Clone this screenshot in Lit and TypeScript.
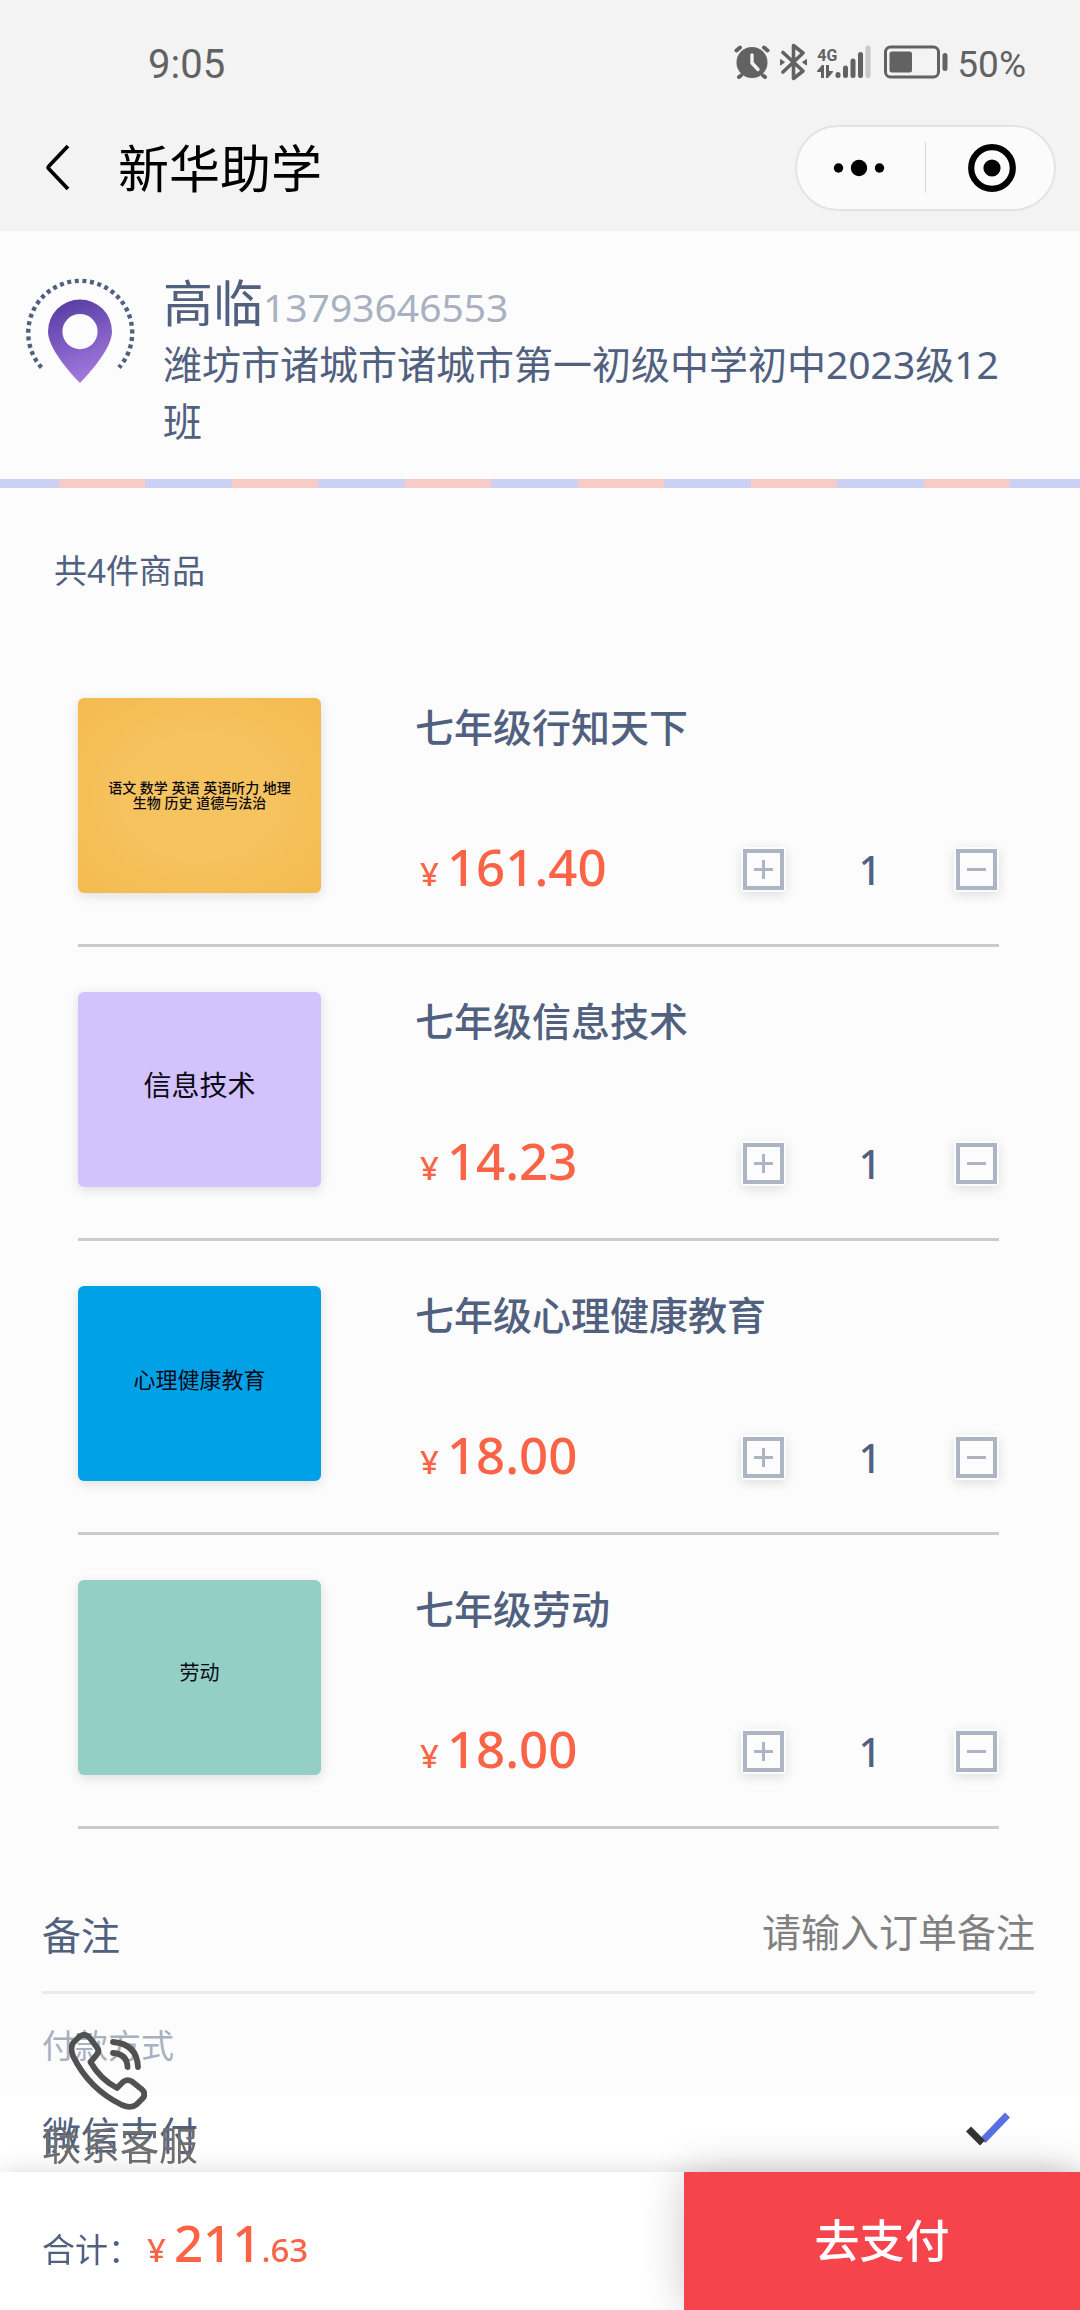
import { LitElement, html, svg, css } from "lit";
import { customElement, property, state } from "lit/decorators.js";
import { classMap } from "lit/directives/class-map.js";

interface Product {
  name: string;
  price: string;
  cover: string[];
  theme: string;
  count: number;
}

const baseFont = css`
  font-family: "Noto Sans", "Noto Sans CJK SC", sans-serif;
`;

@customElement("status-bar")
export class StatusBar extends LitElement {
  static styles = css`
    :host {
      display: flex;
      align-items: center;
      justify-content: space-between;
      height: 78px;
      padding: 26px 54px 0 148px;
      color: #626262;
      font-family: Roboto, sans-serif;
    }
    .time {
      font-size: 40px;
      line-height: 48px;
    }
    .icons {
      display: flex;
      align-items: center;
      height: 48px;
    }
    .icon {
      display: block;
      flex: none;
      padding-bottom: 6px;
    }
    .bluetooth {
      margin-left: 10px;
    }
    .network {
      display: flex;
      flex-direction: column;
      width: 18px;
      margin-left: 10px;
      padding-bottom: 6px;
      font-size: 16px;
      font-weight: 700;
      line-height: 18px;
    }
    .battery {
      margin-left: 13px;
    }
    .percent {
      margin-left: 9px;
      font-size: 37px;
      line-height: 48px;
    }
  `;

  render() {
    return html`
      <span class="time">9:05</span>
      <div class="icons">
        <svg class="icon" width="36" height="34" viewBox="0 0 36 34" aria-hidden="true">
          <g fill="none" stroke="currentColor" stroke-width="4" stroke-linecap="round">
            <path d="M2.500 5.500L6 2.500M33.500 5.500L30 2.500M7 30.500L5 32M29 30.500L31 32" />
          </g>
          <circle cx="18" cy="17.500" r="15.500" fill="currentColor" />
          <path d="M18 10V18L24 24.500" fill="none" stroke="#f3f3f3" stroke-width="3.400" stroke-linecap="round" stroke-linejoin="round" />
        </svg>
        <svg class="icon bluetooth" width="27" height="38" viewBox="0 0 27 38" aria-hidden="true">
          <path d="M3 9.500L23 28L13.500 35.500V2.500L23 10L3 29" fill="none" stroke="currentColor" stroke-width="3.600" stroke-linecap="round" stroke-linejoin="round" />
          <path d="M0.500 16.500L4.500 19.200L0.500 22ZM26.500 16.500L22.500 19.200L26.500 22Z" fill="currentColor" stroke="currentColor" stroke-linejoin="round" />
        </svg>
        <div class="network">
          <span>4G</span>
          <svg width="16" height="13" viewBox="0 0 16 13" aria-hidden="true">
            <path d="M7 0V13H4V7H0V6L5 0ZM9 0H12V6H16V7L11 13H9Z" fill="currentColor" />
          </svg>
        </div>
        <svg class="icon" width="36" height="34" viewBox="0 0 36 34" aria-hidden="true">
          <g stroke="currentColor" stroke-width="5" stroke-linecap="round">
            <path d="M3 29.500V30.500M10.500 23V30.500M18 16V30.500M25.500 9.500V30.500" />
            <path d="M33 3V30.500" stroke="#c8c8c8" />
          </g>
        </svg>
        <svg class="icon battery" width="64" height="34" viewBox="0 0 64 34" aria-hidden="true">
          <rect x="1.500" y="2" width="53" height="30" rx="5" fill="none" stroke="currentColor" stroke-width="3" />
          <rect x="5.500" y="6.500" width="22.500" height="21" rx="2.500" fill="currentColor" />
          <rect x="58.500" y="8" width="5" height="18" rx="2.500" fill="currentColor" />
        </svg>
        <span class="percent">50%</span>
      </div>
    `;
  }
}

@customElement("nav-bar")
export class NavBar extends LitElement {
  @property() heading = "";

  static styles = css`
    :host {
      display: flex;
      align-items: center;
      height: 127px;
      padding: 0 24px 0 40px;
      color: #000;
      ${baseFont}
    }
    button {
      display: flex;
      align-items: center;
      justify-content: center;
      margin: 0;
      padding: 0;
      border: 0;
      background: none;
      color: inherit;
    }
    .heading {
      flex: 1;
      margin: 0 0 0 42px;
      font-size: 51px;
      font-weight: 400;
      line-height: 60px;
    }
    .capsule {
      display: flex;
      align-items: center;
      width: 257px;
      height: 82px;
      border: 2px solid #e3e3e3;
      border-radius: 43px;
      background: #fbfbfb;
    }
    .capsule button {
      flex: 1;
      height: 82px;
    }
    .capsule .more {
      padding-right: 4px;
    }
    .capsule .close {
      padding-left: 4px;
    }
    .divider {
      width: 1px;
      height: 51px;
      background: #d8d8d8;
    }
  `;

  render() {
    return html`
      <button aria-label="返回">
        <svg width="36" height="52" viewBox="0 0 36 52" aria-hidden="true">
          <path d="M28 4L9 24Q7.500 25.500 9 27L28 47" fill="none" stroke="currentColor" stroke-width="3.800" />
        </svg>
      </button>
      <h1 class="heading">${this.heading}</h1>
      <div class="capsule">
        <button class="more" aria-label="更多">
          <svg width="52" height="18" viewBox="0 0 52 18" aria-hidden="true">
            <circle cx="5.500" cy="9" r="4.700" />
            <circle cx="26" cy="9" r="8.200" />
            <circle cx="46.500" cy="9" r="4.700" />
          </svg>
        </button>
        <span class="divider"></span>
        <button class="close" aria-label="关闭">
          <svg width="48" height="48" viewBox="0 0 48 48" aria-hidden="true">
            <circle cx="24" cy="24" r="20.800" fill="none" stroke="currentColor" stroke-width="6.200" />
            <circle cx="24" cy="24" r="8.600" />
          </svg>
        </button>
      </div>
    `;
  }
}

@customElement("address-card")
export class AddressCard extends LitElement {
  static styles = css`
    :host {
      display: block;
      color: #51607f;
      ${baseFont}
    }
    .content {
      display: flex;
      align-items: flex-start;
      gap: 25px;
      padding: 43px 64px 30px 22px;
    }
    .pin {
      flex: none;
      display: block;
    }
    .details {
      flex: 1;
    }
    .contact {
      display: flex;
      align-items: baseline;
      height: 61px;
      line-height: 58px;
    }
    .name {
      font-size: 50px;
    }
    .phone {
      color: #a9b1c0;
      font-size: 39px;
    }
    .address {
      margin: 0;
      font-size: 39px;
      line-height: 57px;
    }
    .stripe {
      height: 9px;
      background: repeating-linear-gradient(
        90deg,
        #cbd0f5 0 59px,
        #f9cbc7 59px 145px,
        #cbd0f5 145px 173px
      );
    }
  `;

  render() {
    return html`
      <div class="content">
        <svg class="pin" width="116" height="116" viewBox="0 0 116 116" aria-hidden="true">
          <defs>
            <linearGradient id="pin-fill" x1="0.300" y1="0" x2="0.600" y2="1">
              <stop offset="0" stop-color="#583da4" />
              <stop offset="1" stop-color="#a67ce0" />
            </linearGradient>
          </defs>
          <path d="M19.500 93.500A52 52 0 1 1 97 93.500" fill="none" stroke="#51607f" stroke-width="4.400" stroke-dasharray="4 3.600" />
          <path d="M58 109C46 97 26 73 26 57.500A32 32 0 0 1 90 57.500C90 73 70 97 58 109ZM58 40A17.600 17.600 0 1 0 58 75.200A17.600 17.600 0 1 0 58 40Z" fill="url(#pin-fill)" fill-rule="evenodd" />
        </svg>
        <div class="details">
          <div class="contact">
            <span class="name">高临</span>
            <span class="phone">13793646553</span>
          </div>
          <p class="address">潍坊市诸城市诸城市第一初级中学初中2023级12班</p>
        </div>
      </div>
      <div class="stripe"></div>
    `;
  }
}

@customElement("product-row")
export class ProductRow extends LitElement {
  @property({ attribute: false }) product!: Product;

  static styles = css`
    :host {
      display: flex;
      gap: 94px;
      padding: 45px 0 51px;
      border-bottom: 3px solid #cbcbcb;
      color: #51607f;
      ${baseFont}
    }
    .cover {
      display: flex;
      flex: none;
      flex-direction: column;
      align-items: center;
      justify-content: center;
      box-sizing: border-box;
      width: 243px;
      height: 195px;
      padding-bottom: 10px;
      border-radius: 6px;
      box-shadow: 0 3px 12px rgba(0, 0, 0, 0.12);
      color: #0a0a14;
    }
    .gold {
      padding-bottom: 2px;
      background: radial-gradient(ellipse at center, #f6c35f 40%, #f4ba4f 100%);
      font-size: 14px;
      font-weight: 500;
      line-height: 15px;
    }
    .violet {
      background: #d4c2fd;
      font-size: 28px;
      line-height: 36px;
    }
    .blue {
      background: #01a1e8;
      font-size: 22px;
      line-height: 30px;
    }
    .green {
      background: #94cfc5;
      font-size: 20px;
      line-height: 24px;
    }
    .info {
      display: flex;
      flex: 1;
      flex-direction: column;
      justify-content: space-between;
      padding-bottom: 1px;
    }
    .name {
      margin: 0;
      font-size: 39px;
      font-weight: 500;
      line-height: 57px;
    }
    .purchase {
      display: flex;
      align-items: center;
      justify-content: space-between;
      height: 45px;
    }
    .price {
      display: flex;
      align-items: baseline;
      gap: 8px;
      padding-left: 5px;
      color: #fa6346;
      font-size: 51px;
      font-weight: 500;
      line-height: 48px;
    }
    .currency {
      font-size: 33px;
    }
    .stepper {
      display: flex;
      align-items: center;
      justify-content: space-between;
      width: 258px;
    }
    .step {
      display: block;
      width: 45px;
      height: 45px;
      padding: 0;
      border: 0;
      border-radius: 4px;
      background: #fcfcfd;
      box-shadow: 0 3px 12px rgba(0, 0, 0, 0.12);
      color: #adb4c4;
    }
    .glyph {
      display: block;
    }
    .count {
      font-size: 39px;
      font-weight: 500;
      line-height: 45px;
    }
  `;

  private change(delta: number) {
    this.dispatchEvent(new CustomEvent("count-change", { detail: delta }));
  }

  render() {
    const p = this.product;
    const frame = svg`<rect x="4" y="4" width="37" height="37" fill="none" stroke="currentColor" stroke-width="4" />`;
    return html`
      <div class=${classMap({ cover: true, [p.theme]: true })}>
        ${p.cover.map((line) => html`<span>${line}</span>`)}
      </div>
      <div class="info">
        <h2 class="name">${p.name}</h2>
        <div class="purchase">
          <div class="price"><span class="currency">¥</span><span>${p.price}</span></div>
          <div class="stepper">
            <button class="step" aria-label="增加" @click=${() => this.change(1)}>
              <svg class="glyph" width="45" height="45" viewBox="0 0 45 45">
                ${frame}
                <path d="M13 22.500H32M22.500 13V32" fill="none" stroke="currentColor" stroke-width="3" />
              </svg>
            </button>
            <span class="count">${p.count}</span>
            <button class="step" aria-label="减少" @click=${() => this.change(-1)}>
              <svg class="glyph" width="45" height="45" viewBox="0 0 45 45">
                ${frame}
                <path d="M13 22.500H32" fill="none" stroke="currentColor" stroke-width="3" />
              </svg>
            </button>
          </div>
        </div>
      </div>
    `;
  }
}

@customElement("app-root")
export class AppRoot extends LitElement {
  @state() private products: Product[] = [
    {
      name: "七年级行知天下",
      price: "161.40",
      cover: ["语文 数学 英语 英语听力 地理", "生物 历史 道德与法治"],
      theme: "gold",
      count: 1,
    },
    { name: "七年级信息技术", price: "14.23", cover: ["信息技术"], theme: "violet", count: 1 },
    { name: "七年级心理健康教育", price: "18.00", cover: ["心理健康教育"], theme: "blue", count: 1 },
    { name: "七年级劳动", price: "18.00", cover: ["劳动"], theme: "green", count: 1 },
  ];

  static styles = css`
    :host {
      display: flex;
      flex-direction: column;
      min-height: 100vh;
      background: #fcfcfc;
      color: #51607f;
      ${baseFont}
    }
    .top {
      background: #f3f3f3;
    }
    .summary {
      padding: 59px 54px 58px;
      font-size: 33px;
      line-height: 48px;
    }
    .products {
      display: flex;
      flex-direction: column;
      margin: 0 81px 48px 78px;
    }
    .remark {
      display: flex;
      align-items: center;
      justify-content: space-between;
      height: 114px;
      margin: 0 45px 0 42px;
      border-bottom: 3px solid #e7ebee;
      font-size: 39px;
      line-height: 57px;
    }
    .remark-input {
      flex: 1;
      min-width: 0;
      margin: 0 0 6px;
      padding: 0;
      border: 0;
      outline: 0;
      background: none;
      color: inherit;
      font: inherit;
      text-align: right;
    }
    .remark-input::placeholder {
      color: #808080;
      opacity: 1;
    }
    .pay-title {
      margin: 0;
      padding: 28px 42px 26px;
      color: #a9b1c0;
      font-size: 33px;
      font-weight: 400;
      line-height: 48px;
    }
    .pay-method {
      display: flex;
      flex: 1;
      align-items: center;
      justify-content: space-between;
      min-height: 76px;
      padding: 0 66px 0 42px;
      background: #fff;
      font-size: 39px;
      line-height: 57px;
    }
    .radio {
      position: absolute;
      opacity: 0;
    }
    .check {
      display: block;
      padding-bottom: 10px;
    }
    .contact {
      position: fixed;
      bottom: 137px;
      left: 42px;
      z-index: 1;
      display: flex;
      flex-direction: column;
      align-items: flex-start;
      gap: 6px;
      color: #707070;
      font-size: 39px;
      line-height: 57px;
      text-decoration: none;
    }
    .handset {
      display: block;
      margin-left: 27px;
      color: #515151;
    }
    .checkout {
      display: flex;
      position: sticky;
      bottom: 0;
      z-index: 2;
      height: 138px;
      background: #fff;
      box-shadow: 0 0 24px rgba(0, 0, 0, 0.14);
    }
    .total {
      display: flex;
      flex: 1;
      align-items: baseline;
      padding: 40px 0 0 42px;
      font-size: 33px;
      line-height: 60px;
    }
    .amount {
      display: flex;
      align-items: baseline;
      margin-left: 6px;
      color: #fa6346;
      font-weight: 500;
    }
    .whole {
      margin-left: 8px;
      font-size: 51px;
    }
    .pay {
      width: 396px;
      padding: 0;
      border: 0;
      background: #f5444b;
      box-shadow: 0 0 42px rgba(0, 0, 0, 0.2);
      color: #fff;
      font: inherit;
      font-size: 45px;
      font-weight: 500;
      line-height: 60px;
    }
  `;

  private changeCount(index: number, delta: number) {
    this.products = this.products.map((p, i) =>
      i === index ? { ...p, count: Math.max(0, p.count + delta) } : p,
    );
  }

  render() {
    return html`
      <header class="top">
        <status-bar></status-bar>
        <nav-bar heading="新华助学"></nav-bar>
      </header>
      <address-card></address-card>
      <div class="summary">共4件商品</div>
      <div class="products">
        ${this.products.map(
          (p, i) => html`<product-row
            .product=${p}
            @count-change=${(e: CustomEvent<number>) => this.changeCount(i, e.detail)}
          ></product-row>`,
        )}
      </div>
      <div class="remark">
        <label for="remark">备注</label>
        <input id="remark" class="remark-input" type="text" placeholder="请输入订单备注" />
      </div>
      <h2 class="pay-title">付款方式</h2>
      <label class="pay-method">
        <span>微信支付</span>
        <input class="radio" type="radio" name="pay" checked />
        <svg class="check" width="50" height="40" viewBox="0 0 50 40" aria-hidden="true">
          <path d="M19 31.500L43.500 6" fill="none" stroke="#5a70e2" stroke-width="7" />
          <path d="M4.500 20L18.500 34" fill="none" stroke="#333" stroke-width="7" />
        </svg>
      </label>
      <a class="contact" href="#contact">
        <svg class="handset" width="78" height="78" viewBox="0 0 78 78" aria-hidden="true">
          <g fill="none" stroke="currentColor" stroke-width="5.800" stroke-linecap="round" stroke-linejoin="round">
            <path d="M10 5Q15.500 0.500 20.500 5.500L28 15.500Q31 19 27.500 23L21.500 30Q31 47 48 56L54 50Q58 46.500 63 49.500L73 57.500Q77.500 62 73.500 66.500L67.500 72.500Q62 77 53 73Q20 57 4 24Q1 16 4 11Z" />
            <path d="M44 10Q68 12 69 35M44 21Q58 22 58.500 35" />
          </g>
        </svg>
        <span>联系客服</span>
      </a>
      <footer class="checkout">
        <div class="total">
          <span>合计：</span>
          <span class="amount"><span>¥</span><span class="whole">211</span><span>.63</span></span>
        </div>
        <button class="pay">去支付</button>
      </footer>
    `;
  }
}
